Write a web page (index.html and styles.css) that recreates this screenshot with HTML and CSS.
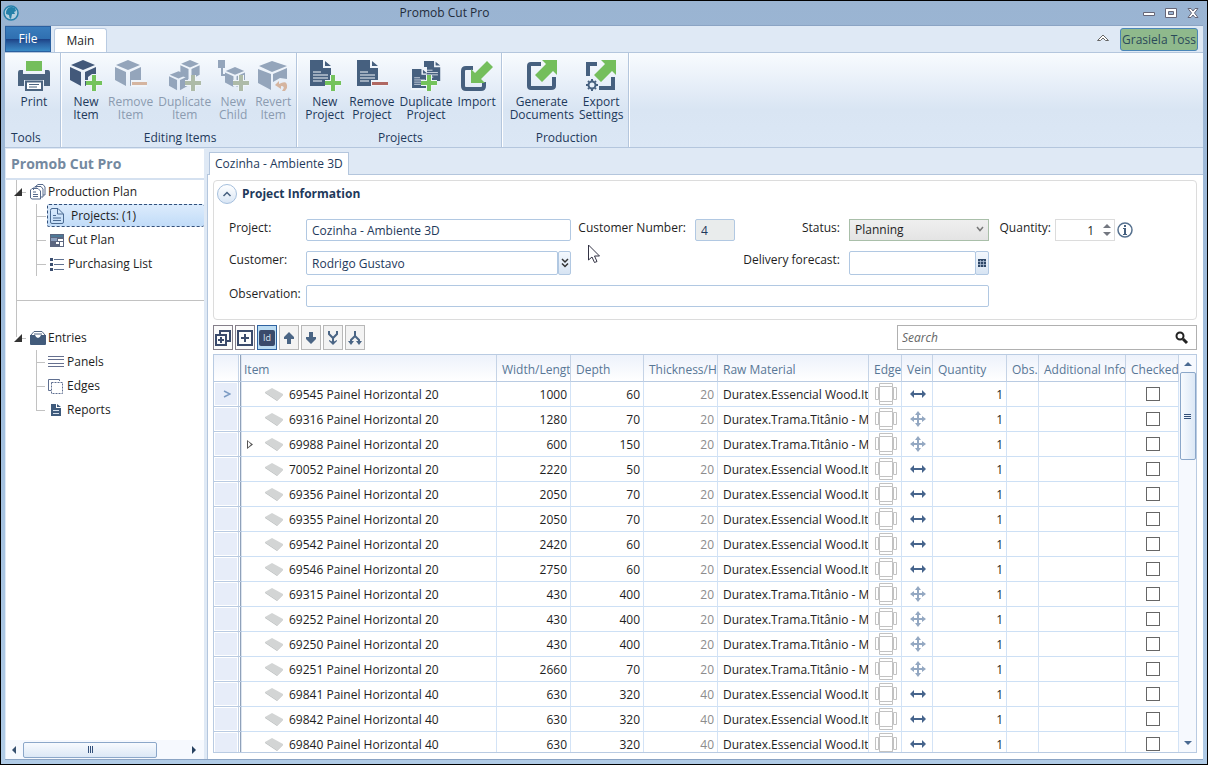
FILE: index.html
```html
<!DOCTYPE html>
<html lang="en">
<head>
    <meta charset="UTF-8">
    <meta name="viewport" content="width=device-width, initial-scale=1.0">
    <title>Promob Cut Pro</title>
    <link rel="stylesheet" href="styles.css">
</head>
<body>

    <!-- Shared icons -->
    <svg class="sprite" aria-hidden="true">
        <symbol id="cube" viewBox="0 0 26 27">
            <path d="M13 0 25 5 13 10 1 5Z M0 7 11 12V26L0 20Z M15 12 26 7V14H22L18 17V20H15Z M15 21H18V25L15 26Z"/>
        </symbol>
        <symbol id="box" viewBox="0 0 26 27">
            <path d="M13 0 25 5 13 10 1 5Z M0 7 11 12V26L0 20Z M15 12 26 7V20L15 26Z"/>
        </symbol>
        <symbol id="doc" viewBox="0 0 22 26">
            <path d="M0 0H13V8H21V26H0Z M15 1 21 6H15Z"/>
            <path d="M3 12H11M3 15H18M3 18H18M3 21H12" stroke="#f2f6fb" stroke-width="1" fill="none"/>
        </symbol>
        <symbol id="plus" viewBox="0 0 16 16">
            <path d="M5 0H11V5H16V11H11V16H5V11H0V5H5Z" fill="#eff4fa"/>
            <path d="M6 0H10V6H16V10H10V16H6V10H0V6H6Z"/>
        </symbol>
        <symbol id="edge" viewBox="0 0 22 22">
            <path d="M4.500 3.500H17.500V18.500H4.500Z M4.500 0.500H17.500V3.500H4.500Z M4.500 18.500H17.500V21.500H4.500Z M0.500 4.500H3.500V16.500H0.500Z M18.500 4.500H21.500V16.500H18.500Z" fill="#fff" stroke="#c2c2c2"/>
        </symbol>
        <symbol id="vein-h" viewBox="0 0 16 16">
            <path d="M0 8 4 4V7H12V4L16 8 12 12V9H4V12Z" fill="#46648c"/>
        </symbol>
        <symbol id="vein-all" viewBox="0 0 16 16">
            <path d="M8 0 11 4H9V7H12V5L16 8 12 11V9H9V12H11L8 16 5 12H7V9H4V11L0 8 4 5V7H7V4H5Z" fill="#94a8c2"/>
        </symbol>
        <symbol id="panel" viewBox="0 0 18 13">
            <path d="M0 4 7 0 18 6 12 12Z" fill="#d3d5d5"/>
            <path d="M0 4 12 12V13L0 5Z M12 12 18 6V7L12 13Z" fill="#b9bcbc"/>
        </symbol>
    </svg>

    <div class="window">
        <header class="titlebar">
            <svg class="app-logo" viewBox="0 0 16 16"><circle cx="8" cy="8" r="7" fill="#b5d0e0" stroke="#2680aa" stroke-width="1.500"/><path d="M5 3Q8 1 12 3L13 6 11 7 12 9 9 9 8 14Q6 13 6 10L3 9Q3 5 5 3Z" fill="#2480a8"/></svg>
            <span class="title">Promob Cut Pro</span>
            <div class="window-buttons">
                <button aria-label="Minimize"><svg viewBox="0 0 14 12"><path d="M1.500 5.500H12.500V8.500H1.500Z" fill="#fff" stroke="#667"/></svg></button>
                <button aria-label="Maximize"><svg viewBox="0 0 14 12"><path d="M1.500 1.500H12.500V10.500H1.500Z M4.500 4.500H9.500V7.500H4.500Z" fill="#fff" fill-rule="evenodd" stroke="#667"/></svg></button>
                <button aria-label="Close"><svg viewBox="0 0 14 12"><path d="M2 1.500H5L7 4 9 1.500H12L8.500 6 12 10.500H9L7 8 5 10.500H2L5.500 6Z" fill="#fff" stroke="#667"/></svg></button>
            </div>
        </header>

        <nav class="tabs">
            <button class="tab-file">File</button>
            <button class="tab-main">Main</button>
            <button class="collapse" aria-label="Collapse ribbon"><svg viewBox="0 0 14 9"><path d="M1.500 7.500 7 2 12.500 7.500H9.500L7 5 4.500 7.500Z" fill="#fff" stroke="#666"/></svg></button>
            <button class="user">Grasiela Toss</button>
        </nav>

        <div class="ribbon">
            <section class="group tools">
                <div class="commands">
                    <button><svg viewBox="0 0 32 32"><path d="M8 1H24V11H8Z" fill="#74be5c"/><path d="M2 10Q0 10 0 13V26H6V20H26V26H32V13Q32 10 30 10H27V14H5V10Z" fill="#4b6480"/><path d="M8 21.500H24V30H8Z" fill="#fff" stroke="#4b6480" stroke-width="2"/><path d="M11 24.500H21M11 27H19" stroke="#4b6480"/></svg>Print</button>
                </div>
                <h2>Tools</h2>
            </section>
            <section class="group">
                <div class="commands">
                    <button><svg viewBox="0 0 32 32" fill="#43597a"><use href="#cube" width="26" height="27"/><use href="#plus" x="16" y="15" width="16" height="16" fill="#74c35c"/></svg>New<br>Item</button>
                    <button disabled><svg viewBox="0 0 32 32" fill="#94a5bb"><use href="#box" width="26" height="27"/><path d="M16 20H32V27H16Z" fill="#eff4fa"/><path d="M17 22H32V25H17Z" fill="#d5b5a0"/></svg>Remove<br>Item</button>
                    <button disabled><svg viewBox="0 0 32 32" fill="#94a5bb"><use href="#box" x="11" width="20" height="20"/><use href="#box" y="11" width="19" height="20"/><use href="#plus" x="16" y="15" width="16" height="16" fill="#aebba8"/></svg>Duplicate<br>Item</button>
                    <button disabled><svg viewBox="0 0 32 32" fill="#94a5bb"><path d="M1 0H8V8H6V14H9V16H4V8H1Z"/><use href="#box" x="8" y="7" width="20" height="21"/><use href="#plus" x="16" y="15" width="16" height="16" fill="#aebba8"/></svg>New<br>Child</button>
                    <button disabled><svg viewBox="0 0 32 32" fill="#94a5bb"><path d="M15 1 30 6 15 12 2 6Z M1 9 14 14V30L1 23Z M16 14 30 8V19L23 18 16 22Z"/><path d="M18 25 22 21V24Q31 19 30 28L28 31H25Q29 26 24 26V29Z" fill="#d5b5a0"/></svg>Revert<br>Item</button>
                </div>
                <h2>Editing Items</h2>
            </section>
            <section class="group">
                <div class="commands">
                    <button><svg viewBox="0 0 32 32" fill="#46607f"><use href="#doc" width="22" height="26" x="1"/><use href="#plus" x="16" y="15" width="16" height="16" fill="#74c35c"/></svg>New<br>Project</button>
                    <button><svg viewBox="0 0 32 32" fill="#46607f"><use href="#doc" width="22" height="26" x="1"/><path d="M15 20H32V26H15Z" fill="#eff4fa"/><path d="M16 22H32V25H16Z" fill="#b06862"/></svg>Remove<br>Project</button>
                    <button><svg viewBox="0 0 32 32" fill="#46607f"><use href="#doc" x="14" y="0" width="17" height="22"/><path d="M1 7H17V30H1Z" fill="#eff4fa"/><use href="#doc" x="2" y="8" width="16" height="21"/><use href="#plus" x="11" y="15" width="16" height="16" fill="#74c35c"/></svg>Duplicate<br>Project</button>
                    <button><svg viewBox="0 0 32 32"><path d="M12 8H5Q2 8 2 11V26Q2 29 5 29H20Q23 29 23 26V22" fill="none" stroke="#46607f" stroke-width="4"/><path d="M10 9V23H24L20 19 32 7 26 1 14 13Z" fill="#74be5c"/></svg>Import</button>
                </div>
                <h2>Projects</h2>
            </section>
            <section class="group production">
                <div class="commands">
                    <button><svg viewBox="0 0 32 32"><path d="M15 4H5Q3 4 3 6V26Q3 28 5 28H25Q28 28 28 26V17" fill="none" stroke="#46607f" stroke-width="4"/><path d="M16 0H31V15L27 11 16 22 9 15 20 4Z" fill="#74be5c"/></svg>Generate<br>Documents</button>
                    <button><svg viewBox="0 0 32 32"><path d="M12 4H3V16M14 28H28V17" fill="none" stroke="#46607f" stroke-width="4"/><path d="M16 0H31V15L27 11 16 22 9 15 20 4Z" fill="#74be5c"/><circle cx="7" cy="25" r="3.500" fill="none" stroke="#46607f" stroke-width="2"/><path d="M7 19V21M7 29V31M1 25H3M11 25H13M3 21 4 22M10 28 11 29M11 21 10 22M4 28 3 29" stroke="#46607f" stroke-width="2"/></svg>Export<br>Settings</button>
                </div>
                <h2>Production</h2>
            </section>
        </div>

        <div class="content">
            <aside class="sidebar">
                <h1>Promob Cut Pro</h1>
                <div class="tree">
                    <section class="branch">
                        <div class="root"><i class="expander"></i><svg viewBox="0 0 16 16"><path d="M6 4V2L8 .500H13L15 3V11H13M3.500 6V4L5 2.500H11L13 5V13H11M.500 6 2 4.500H8L10.500 7V15H2L.500 14Z M3 8H6M3 10.500H8M3 12.500H8" fill="none" stroke="#566a8c"/></svg>Production Plan</div>
                        <ul>
                            <li><a href="#projects" class="selected"><svg viewBox="0 0 16 16"><path d="M1.500 2.500Q1.500 .500 3 .500H9L14.500 6V14Q14.500 15.500 13 15.500H3Q1.500 15.500 1.500 14ZM8.500 1V6H14M4 7.500H7M4 10H12M4 12.500H12" fill="none" stroke="#4a6a92"/></svg>Projects: (1)</a></li>
                            <li><a href="#cutplan"><svg viewBox="0 0 16 16"><path d="M1 2H15V15H1Z" fill="#5b6680"/><path d="M2 3H14V5H2Z" fill="#4d7896"/><path d="M2 6H8V9H2Z" fill="#8da0be"/><path d="M9 7H14V9H9ZM7 10H10V12H7ZM11 10H14V14H11Z" fill="#fff"/></svg>Cut Plan</a></li>
                            <li><a href="#purchasing"><svg viewBox="0 0 16 16"><path d="M1 2H4V5H1ZM1 7H4V10H1ZM1 12H4V15H1Z" fill="#3c4f70"/><path d="M5 3.500H15M5 8.500H15M5 13.500H15" stroke="#5f7190"/></svg>Purchasing List</a></li>
                        </ul>
                    </section>
                    <section class="branch entries">
                        <div class="root"><i class="expander"></i><svg viewBox="0 0 16 16"><path d="M1 5 4 1.500H12L15 5" fill="#fff" stroke="#526784"/><path d="M0 5H5Q6 8 8 8T11 5H16V14Q16 15 15 15H1Q0 15 0 14Z" fill="#425b7b"/><path d="M4 4H12" stroke="#526784"/></svg>Entries</div>
                        <ul>
                            <li><a href="#panels"><svg viewBox="0 0 16 16"><path d="M0 2.500H16M0 5.500H16M0 9.500H16M0 12.500H16" stroke="#66708f"/></svg>Panels</a></li>
                            <li><a href="#edges"><svg viewBox="0 0 16 16"><path d="M3 12.500H.500V1.500H11.500V3" fill="none" stroke="#5f6f90"/><path d="M3.500 4.500H14.500V15.500H3.500Z" fill="none" stroke="#5f6f90" stroke-dasharray="2 1"/></svg>Edges</a></li>
                            <li><a href="#reports"><svg viewBox="0 0 16 16"><path d="M3 2H8V6H13V14H3ZM9 2 13 5H9Z" fill="#3f5b7c"/><path d="M5 8.500H11M5 11.500H11" stroke="#d5dfec"/></svg>Reports</a></li>
                        </ul>
                    </section>
                </div>
                <div class="hscroll">
                    <button aria-label="Scroll left"><svg viewBox="0 0 8 8"><path d="M6 0V8L2 4Z" fill="#36506f"/></svg></button>
                    <div class="hthumb"></div>
                    <button aria-label="Scroll right"><svg viewBox="0 0 8 8"><path d="M2 0V8L6 4Z" fill="#26405f"/></svg></button>
                </div>
            </aside>

            <main>
                <div class="doc-tabs"><button>Cozinha - Ambiente 3D</button></div>
                <div class="document">
                    <section class="info">
                        <div class="info-head">
                            <button aria-label="Collapse"><svg viewBox="0 0 10 10"><path d="M1.500 7 5 3.500 8.500 7" fill="none" stroke="#46607f" stroke-width="1.500"/></svg></button>
                            <h3>Project Information</h3>
                        </div>
                        <form class="fields">
                            <label for="project">Project:</label>
                            <input id="project" type="text" value="Cozinha - Ambiente 3D">
                            <label for="number" class="right">Customer Number:</label>
                            <input id="number" type="text" value="4" disabled>
                            <label for="status" class="right">Status:</label>
                            <div class="select">
                                <select id="status"><option>Planning</option></select>
                                <svg viewBox="0 0 8 8"><path d="M1 2 4 5.500 7 2" fill="none" stroke="#777" stroke-width="1.500"/></svg>
                            </div>
                            <label for="quantity" class="right tight">Quantity:</label>
                            <div class="spinner">
                                <input id="quantity" type="text" value="1">
                                <svg viewBox="0 0 8 12"><path d="M4 0 8 4H0ZM4 12 8 8H0Z" fill="#737780"/></svg>
                            </div>
                            <svg class="hint" viewBox="0 0 16 16"><circle cx="8" cy="8" r="7" fill="#fff" stroke="#56718f" stroke-width="1.500"/><path d="M7 3H9V5H7ZM6 6H9V12H10V13H6V12H7V7H6Z" fill="#46607f"/></svg>

                            <label for="customer">Customer:</label>
                            <div class="combo">
                                <input id="customer" type="text" value="Rodrigo Gustavo">
                                <button type="button" aria-label="Find customer"><svg viewBox="0 0 8 10"><path d="M1 1 4 4 7 1M1 5.500 4 8.500 7 5.500" fill="none" stroke="#333" stroke-width="1.500"/></svg></button>
                            </div>
                            <label for="delivery" class="right forecast">Delivery forecast:</label>
                            <div class="combo date">
                                <input id="delivery" type="text">
                                <button type="button" aria-label="Pick date"><svg viewBox="0 0 8 8"><path d="M0 0H8V8H0Z" fill="#2f4868"/><path d="M0 2.500H8M0 5.500H8M2.500 1V8M5.500 1V8" stroke="#b9c9de" stroke-width=".7"/></svg></button>
                            </div>

                            <label for="observation" class="row-start">Observation:</label>
                            <input id="observation" type="text">
                        </form>
                    </section>

                    <div class="toolbar">
                        <button class="dark" aria-label="Expand all"><svg viewBox="0 0 18 18"><path d="M6 6V2H16V12H12M2 6H12V16H2Z" fill="none" stroke="#3a4a6b" stroke-width="2"/><path d="M7 8V14M4 11H10" stroke="#3a4a6b" stroke-width="2"/></svg></button>
                        <button class="dark" aria-label="Expand"><svg viewBox="0 0 18 18"><path d="M2 2H16V16H2Z" fill="none" stroke="#3a4a6b" stroke-width="2"/><path d="M9 5V13M5 9H13" stroke="#3a4a6b" stroke-width="2"/></svg></button>
                        <button class="active"><span>Id</span></button>
                        <button aria-label="Move up"><svg viewBox="0 0 18 18"><path d="M9 3 14 8V10H11V15H7V10H4V8Z" fill="#4a6585"/></svg></button>
                        <button aria-label="Move down"><svg viewBox="0 0 18 18"><path d="M9 15 14 10V8H11V3H7V8H4V10Z" fill="#4a6585"/></svg></button>
                        <button aria-label="Merge"><svg viewBox="0 0 18 18"><path d="M5 2V5L9 9 13 5V2M9 8V14" fill="none" stroke="#4a6585" stroke-width="2"/><path d="M5 12 9 16 13 12V11L9 13 5 11Z" fill="#4a6585"/></svg></button>
                        <button aria-label="Split"><svg viewBox="0 0 18 18"><path d="M9 2V7L5 11V13M9 7 13 11V13" fill="none" stroke="#4a6585" stroke-width="2"/><path d="M2 12H8L5 16ZM10 12H16L13 16Z" fill="#4a6585"/></svg></button>
                        <div class="search">
                            <input type="text" placeholder="Search" aria-label="Search">
                            <svg viewBox="0 0 14 14"><circle cx="5" cy="5" r="3.500" fill="none" stroke="#222" stroke-width="2"/><path d="M8 8 12 12" stroke="#222" stroke-width="3"/></svg>
                        </div>
                    </div>

                    <div class="grid">
                        <div class="grid-body">
                            <table>
                                <colgroup>
                                    <col class="c-row"><col><col class="c-num"><col class="c-depth"><col class="c-num"><col class="c-raw"><col class="c-edge"><col class="c-vein"><col class="c-num"><col class="c-obs"><col class="c-info"><col class="c-check">
                                </colgroup>
                                <thead>
                                    <tr><th class="handle"></th><th class="first">Item</th><th>Width/Length</th><th>Depth</th><th>Thickness/Height</th><th>Raw Material</th><th>Edge</th><th>Vein</th><th>Quantity</th><th>Obs.</th><th>Additional Info</th><th>Checked</th></tr>
                                </thead>
                                <tbody id="rows"></tbody>
                            </table>
                        </div>
                        <div class="vscroll">
                            <button aria-label="Scroll up"><svg viewBox="0 0 8 8"><path d="M0 6H8L4 2Z" fill="#4a6a92"/></svg></button>
                            <div class="vthumb"></div>
                            <button class="down" aria-label="Scroll down"><svg viewBox="0 0 8 8"><path d="M0 2H8L4 6Z" fill="#4a6a92"/></svg></button>
                        </div>
                    </div>
                </div>
            </main>
        </div>
    </div>

    <svg class="pointer" viewBox="0 0 12 20"><path d="M.500 1V16L4 13 6.500 18.500 9 17.500 6.500 12H11.500Z" fill="#fff" stroke="#334"/></svg>

    <script src="script.js"></script>
</body>
</html>
```
FILE: styles.css
```css
* {
    box-sizing: border-box;
}

body {
    margin: 0;
    font-family: "Open Sans", "Noto Sans", sans-serif;
    font-size: 12px;
    line-height: 16px;
    color: #1e1e1e;
}

h1, h2, h3, ul {
    margin: 0;
    padding: 0;
    font-size: 12px;
    font-weight: normal;
}

button, input, select {
    font: inherit;
    color: inherit;
    margin: 0;
    padding: 0;
}

button {
    border: none;
    background: none;
}

svg {
    flex: none;
    display: block;
}

.sprite {
    position: absolute;
    width: 0;
    height: 0;
}

.window {
    height: 100vh;
    display: flex;
    flex-direction: column;
    padding: 0 4px 4px;
    border: 1px solid #000;
    background: linear-gradient(#9ab4d2, #a2bfde 50%, #b0cbe6);
}

/* Title bar */
.titlebar {
    display: flex;
    align-items: center;
    height: 24px;
    flex: none;
}

.app-logo {
    width: 16px;
    height: 16px;
    margin-left: -2px;
}

.title {
    flex: 1;
    padding-right: 272px;
    text-align: center;
    color: #222c3a;
}

.window-buttons {
    display: flex;
    gap: 8px;
    margin-right: 3px;
}

.window-buttons svg {
    width: 14px;
    height: 12px;
}

/* Ribbon tabs */
.tabs {
    display: flex;
    align-items: flex-end;
    height: 28px;
    flex: none;
    padding-right: 5px;
    background: #dfe9f5;
    border-top: 1px solid #8ba4c4;
    border-bottom: 1px solid #b4c6dd;
}

.tab-file {
    width: 46px;
    height: 26px;
    color: #fff;
    background: linear-gradient(#3a7dbd, #2f6fb0 50%, #1e4488 52%, #2b63a4 70%, #3a8ac6);
    border: 1px solid #2a60a0;
}

.tab-main {
    width: 53px;
    height: 24px;
    margin-left: 3px;
    background: #fff;
    border: 1px solid #b9cbe2;
    border-bottom: none;
    border-radius: 3px 3px 0 0;
}

.collapse {
    margin-left: auto;
    padding: 0 10px 10px 0;
}

.collapse svg {
    width: 14px;
    height: 9px;
}

.user {
    width: 78px;
    height: 23px;
    margin-bottom: 1px;
    color: #2b4a5a;
    background: #8fb98c;
    border: 1px solid #4a86b8;
    border-radius: 3px;
}

/* Ribbon */
.ribbon {
    display: flex;
    flex: none;
    height: 95px;
    color: #1e395b;
    background: linear-gradient(#f8fbfe, #e6eef8 35%, #d9e5f3 60%, #dbe7f5);
    border-bottom: 1px solid #b4c6dd;
}

.group {
    display: flex;
    flex-direction: column;
    justify-content: space-between;
    padding: 6px 5px 1px 8px;
    border-right: 1px solid #b4c6dd;
    box-shadow: 1px 0 #fff;
}

.tools {
    width: 56px;
    padding-left: 12px;
}

.commands {
    display: flex;
    align-items: flex-start;
    gap: 5px;
}

.commands button {
    display: flex;
    flex-direction: column;
    align-items: center;
    min-width: 34px;
    line-height: 13px;
}

.commands button:disabled {
    color: #8b9bb0;
}

.commands svg {
    width: 32px;
    height: 32px;
    margin: 1px 0 3px;
}

.group h2 {
    text-align: center;
}

.tools h2 {
    margin-left: -6px;
    text-align: left;
}

/* Sidebar */
.content {
    display: flex;
    flex: 1;
    min-height: 0;
    gap: 3px;
    padding: 1px 0 0 1px;
    background: #dfe9f5;
    border-bottom: 1px solid #8ba4c4;
}

.sidebar {
    display: flex;
    flex-direction: column;
    flex: none;
    width: 198px;
    background: #fff;
}

.sidebar h1 {
    height: 31px;
    padding: 7px 5px;
    font-size: 14px;
    font-weight: bold;
    color: #7489a0;
    border-bottom: 2px solid #d5e1f0;
}

.tree {
    flex: 1;
    padding-left: 10px;
}

.branch {
    position: relative;
    height: 120px;
}

.branch::before {
    content: "";
    position: absolute;
    top: 0;
    bottom: 0;
    border-left: 1px solid #c2c2c2;
}

.entries {
    height: auto;
    padding-top: 25px;
    border-top: 1px solid #c2c2c2;
}

.entries::before {
    bottom: auto;
    height: 36px;
}

.root {
    position: relative;
    display: flex;
    align-items: center;
    gap: 2px;
    height: 24px;
}

.expander {
    width: 12px;
    height: 8px;
    margin-left: -2px;
    background: linear-gradient(#c2c2c2, #c2c2c2) 7px 4px / 5px 1px no-repeat;
}

.expander::before {
    content: "";
    display: block;
    width: 8px;
    height: 8px;
    background: #333;
    clip-path: polygon(100% 0, 100% 100%, 0 100%);
}

.root svg {
    width: 16px;
    height: 16px;
    margin-left: 2px;
}

.tree ul {
    margin-left: 20px;
    list-style: none;
    border-left: 1px solid #c2c2c2;
}

.entries ul {
    border-left: none;
    background: linear-gradient(#c2c2c2, #c2c2c2) 0 0 / 1px 60px no-repeat;
}

.tree li {
    height: 24px;
    background: linear-gradient(#c2c2c2, #c2c2c2) 0 12px / 9px 1px no-repeat;
}

.tree a {
    display: flex;
    align-items: center;
    gap: 3px;
    height: 23px;
    margin-left: 10px;
    padding-left: 2px;
    color: inherit;
    text-decoration: none;
}

.tree a svg {
    width: 16px;
    height: 16px;
}

.tree a.selected {
    gap: 6px;
    padding-left: 1px;
    background: linear-gradient(#dcebfc, #c1dcf8);
    border: 1px dashed #33507a;
    border-right: none;
    border-radius: 2px;
}

.hscroll {
    display: flex;
    align-items: center;
    height: 19px;
    padding: 0 4px;
    background: #f6f9fe;
}

.hscroll svg, .vscroll svg {
    width: 8px;
    height: 8px;
}

.hthumb {
    width: 134px;
    height: 16px;
    margin: 0 33px 0 5px;
    border: 1px solid #8ba7c9;
    border-radius: 2px;
    background:
        repeating-linear-gradient(90deg, #33507a 0 1px, transparent 1px 2px) center / 5px 7px no-repeat,
        linear-gradient(#f7fafe, #dce8f6);
}

/* Document area */
main {
    display: flex;
    flex-direction: column;
    flex: 1;
    min-width: 0;
}

.doc-tabs {
    height: 25px;
    padding: 3px 2px 0;
}

.doc-tabs button {
    position: relative;
    height: 23px;
    padding: 0 5px;
    color: #1e395b;
    background: #fff;
    border: 1px solid #b4c6dd;
    border-bottom: none;
}

.document {
    display: flex;
    flex-direction: column;
    flex: 1;
    min-height: 0;
    padding: 5px 6px 6px 5px;
    background: #fff;
    border: 1px solid #b4c6dd;
    border-width: 1px 0 0 1px;
}

.info {
    height: 140px;
    padding: 3px;
    border: 1px solid #dcdcdc;
    border-radius: 4px;
}

.info-head {
    display: flex;
    align-items: center;
    gap: 5px;
}

.info-head button {
    display: flex;
    align-items: center;
    justify-content: center;
    width: 20px;
    height: 20px;
    border: 1px solid #a5bfdd;
    border-radius: 50%;
    background: linear-gradient(#fff, #d9e6f5);
}

.info-head svg {
    width: 10px;
    height: 10px;
}

.info-head h3 {
    font-weight: bold;
    color: #1e395b;
}

.fields {
    display: grid;
    grid-template-columns: 77px 265px 124px 40px 114px 140px 66px 60px 18px;
    grid-template-rows: 22px 24px 22px;
    row-gap: 10px;
    margin: 15px 0 0 12px;
}

.fields label {
    padding-top: 1px;
}

.fields .right {
    padding-right: 9px;
    text-align: right;
}

.fields .tight {
    padding-right: 4px;
}

.forecast {
    grid-column: 3 / 6;
}

.row-start {
    grid-column: 1;
}

.fields input {
    width: 100%;
    height: 100%;
    padding: 0 5px;
    color: #1e395b;
    background: #fff;
    border: 1px solid #b1c8e2;
    border-radius: 2px;
}

.fields input:disabled {
    background: #e9ecec;
}

#observation {
    grid-column: 2 / 7;
}

.select, .spinner {
    position: relative;
}

.select select {
    width: 100%;
    height: 100%;
    padding: 0 5px;
    appearance: none;
    background: linear-gradient(#efefef, #e4e4e4);
    border: 1px solid #a9bfa9;
    border-radius: 0;
}

.select svg {
    position: absolute;
    top: 6px;
    right: 5px;
    width: 8px;
    height: 8px;
}

.fields .spinner input {
    padding-right: 20px;
    text-align: right;
    color: #1e1e1e;
    border-color: #dcdcdc;
    border-radius: 0;
}

.spinner svg {
    position: absolute;
    top: 5px;
    right: 4px;
    width: 8px;
    height: 12px;
}

.hint {
    width: 16px;
    height: 16px;
    margin: 3px 0 0 2px;
}

.combo {
    display: flex;
}

.combo input {
    flex: 1;
    min-width: 0;
}

.combo button {
    display: flex;
    align-items: center;
    justify-content: center;
    width: 13px;
    background: linear-gradient(#f4f8fd, #d7e4f3);
    border: 1px solid #b1c8e2;
    border-radius: 2px;
}

.combo svg {
    width: 8px;
    height: 10px;
}

.date button {
    width: 14px;
    margin-left: -1px;
}

/* Toolbar */
.toolbar {
    display: flex;
    gap: 2px;
    height: 25px;
    margin: 5px 0 4px;
}

.toolbar button {
    display: flex;
    align-items: center;
    justify-content: center;
    width: 20px;
    background: #f3f3f3;
    border: 1px solid #b8b8b8;
}

.toolbar button svg {
    width: 18px;
    height: 18px;
}

.toolbar .dark {
    background: #fbfbfb;
    border-color: #857f8a;
}

.toolbar .active {
    background: #bcdcf2;
    border-color: #2f62a0;
}

.active span {
    width: 16px;
    height: 16px;
    border-radius: 2px;
    background: #3a4a6b;
    color: #dfe7f2;
    font-size: 9px;
}

.search {
    display: flex;
    align-items: center;
    width: 300px;
    margin-left: auto;
    padding: 0 7px 0 4px;
    border: 1px solid #b0b0b0;
}

.search input {
    flex: 1;
    min-width: 0;
    border: none;
    outline: none;
}

.search input::placeholder {
    font-style: italic;
    color: #666;
}

.search svg {
    width: 14px;
    height: 14px;
}

/* Items grid */
.grid {
    display: flex;
    flex: 1;
    min-height: 0;
    border: 1px solid #b9cbe2;
}

.grid-body {
    flex: 1;
    min-width: 0;
    overflow: hidden;
}

table {
    width: 100%;
    table-layout: fixed;
    border-collapse: separate;
    border-spacing: 0;
}

.c-row { width: 28px; }
.c-num { width: 74px; }
.c-depth { width: 73px; }
.c-raw { width: 151px; }
.c-edge { width: 33px; }
.c-vein { width: 31px; }
.c-obs { width: 32px; }
.c-info { width: 87px; }
.c-check { width: 53px; }

th {
    height: 27px;
    padding: 3px 1px 0 5px;
    overflow: hidden;
    white-space: nowrap;
    text-align: left;
    font-weight: normal;
    color: #587796;
    background: linear-gradient(#edf2fb, #fff);
    border-right: 1px solid #c5d3e6;
    border-bottom: 1px solid #b9cbe2;
}

td {
    height: 25px;
    padding: 1px 3px 0 5px;
    overflow: hidden;
    white-space: nowrap;
    border-right: 1px solid #d3e3f6;
    border-bottom: 1px solid #cde0f5;
}

th.first {
    padding-left: 2px;
}

/* Row header, with the frozen column line on its right */
.handle {
    padding: 0;
    border-right: none;
    background:
        linear-gradient(90deg, #c5d3e6 25%, #fff 25% 50%, #8fa1ba 50% 75%, #dde5ef 75%) right / 4px 100% no-repeat,
        linear-gradient(#edf2fb, #fff);
}

td.handle {
    background:
        linear-gradient(90deg, #c5d3e6 25%, #fff 25% 50%, #8fa1ba 50% 75%, #dde5ef 75%) right / 4px 100% no-repeat,
        linear-gradient(#e7edf9, #e7edf9) 1px 1px / 22px 22px no-repeat;
    border-bottom-color: #b9cbe2;
}

.handle svg {
    width: 8px;
    height: 8px;
    margin-left: 9px;
}

.item {
    display: flex;
    align-items: center;
}

.item svg {
    width: 18px;
    height: 13px;
    margin-right: 6px;
}

.item i {
    width: 18px;
    height: 9px;
}

.item i.closed {
    background: #555;
    clip-path: polygon(0 0, 6px 50%, 0 100%, 0 15%, 1px 15%, 1px 80%, 4px 50%, 1px 15%, 0 15%);
}

.num {
    text-align: right;
}

.muted {
    color: #8c8c8c;
}

.icon {
    padding: 0 0 0 2px;
}

.icon svg {
    margin: 0 auto;
    width: 16px;
    height: 16px;
}

.icon .edge {
    width: 22px;
    height: 22px;
}

.icon input {
    display: block;
    appearance: none;
    width: 14px;
    height: 14px;
    margin: 0 auto;
    border: 1px solid #666;
    background: #fff;
}

.vscroll {
    display: flex;
    flex-direction: column;
    align-items: center;
    width: 17px;
    padding: 5px 0;
    background: #f6f9fe;
}

.vthumb {
    width: 16px;
    height: 88px;
    margin-top: 4px;
    border: 1px solid #8ba7c9;
    border-radius: 2px;
    background:
        repeating-linear-gradient(#33507a 0 1px, transparent 1px 2px) center / 7px 5px no-repeat,
        linear-gradient(90deg, #f7fafe, #dce8f6);
}

.vscroll .down {
    margin-top: auto;
}

.pointer {
    position: absolute;
    left: 588px;
    top: 244px;
    width: 12px;
    height: 20px;
}
```
FILE: script.js
```javascript
const wood = 'Duratex.Essencial Wood.Itapuã';
const trama = 'Duratex.Trama.Titânio - MDF';

// id, name, width, depth, thickness, material
const items = [
    [69545, 'Painel Horizontal 20', 1000, 60, 20, wood],
    [69316, 'Painel Horizontal 20', 1280, 70, 20, trama],
    [69988, 'Painel Horizontal 20', 600, 150, 20, trama],
    [70052, 'Painel Horizontal 20', 2220, 50, 20, wood],
    [69356, 'Painel Horizontal 20', 2050, 70, 20, wood],
    [69355, 'Painel Horizontal 20', 2050, 70, 20, wood],
    [69542, 'Painel Horizontal 20', 2420, 60, 20, wood],
    [69546, 'Painel Horizontal 20', 2750, 60, 20, wood],
    [69315, 'Painel Horizontal 20', 430, 400, 20, trama],
    [69252, 'Painel Horizontal 20', 430, 400, 20, trama],
    [69250, 'Painel Horizontal 20', 430, 400, 20, trama],
    [69251, 'Painel Horizontal 20', 2660, 70, 20, trama],
    [69841, 'Painel Horizontal 40', 630, 320, 40, wood],
    [69842, 'Painel Horizontal 40', 630, 320, 40, wood],
    [69840, 'Painel Horizontal 40', 630, 320, 40, wood]
];

const current = '<svg viewBox="0 0 8 8"><path d="M1 1 7 4 1 7" fill="none" stroke="#7d9cc4" stroke-width="1.5"/></svg>';

document.getElementById('rows').innerHTML = items.map(([id, name, width, depth, thick, material], i) => `
    <tr>
        <td class="handle">${i === 0 ? current : ''}</td>
        <td><div class="item"><i class="${id === 69988 ? 'closed' : ''}"></i><svg><use href="#panel"/></svg>${id} ${name}</div></td>
        <td class="num">${width}</td>
        <td class="num">${depth}</td>
        <td class="num muted">${thick}</td>
        <td>${material}</td>
        <td class="icon"><svg class="edge"><use href="#edge"/></svg></td>
        <td class="icon"><svg><use href="#${material === wood ? 'vein-h' : 'vein-all'}"/></svg></td>
        <td class="num">1</td>
        <td></td>
        <td></td>
        <td class="icon"><input type="checkbox" aria-label="Checked ${id}"></td>
    </tr>`).join('');
```
